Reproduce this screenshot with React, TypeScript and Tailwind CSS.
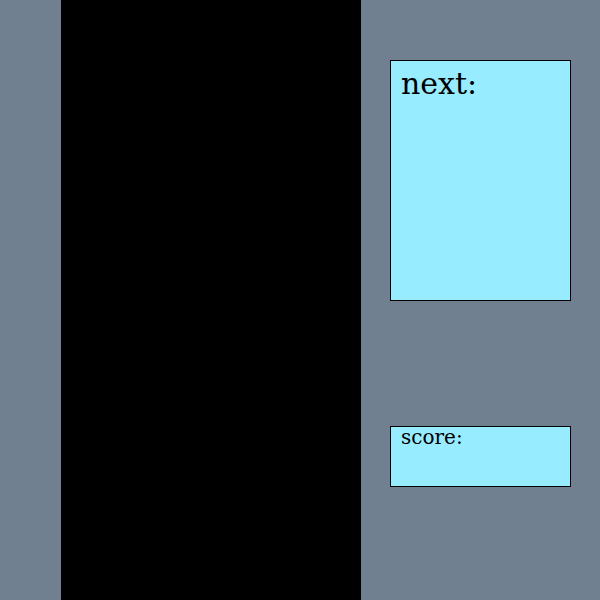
export default function App() {
  return (
    <main
      className="w-[600px] h-[600px] flex bg-[#708090] overflow-hidden"
      style={{ fontFamily: '"DejaVu Serif", serif' }}
    >
      {/* left gutter */}
      <div className="w-[61px] shrink-0" />

      {/* board */}
      <div className="w-[300px] h-[600px] shrink-0 bg-black" />

      {/* side panel */}
      <aside className="flex-1 pl-[29px] pt-[60px]">
        <div className="w-[181px] h-[241px] bg-[#98ecff] border border-black pl-[10px] pt-[8px]">
          <p className="text-[30px] leading-none text-black">next:</p>
        </div>
        <div className="mt-[125px] w-[181px] h-[61px] bg-[#98ecff] border border-black pl-[10px]">
          <p className="text-[20px] leading-none text-black">score:</p>
        </div>
      </aside>
    </main>
  );
}
